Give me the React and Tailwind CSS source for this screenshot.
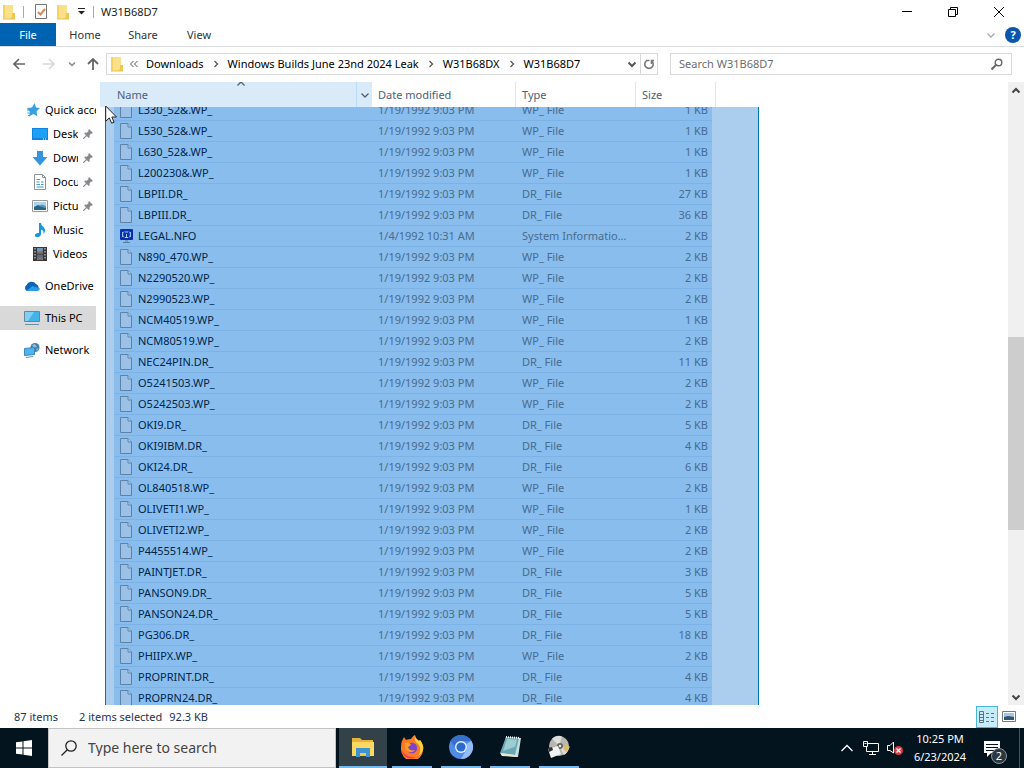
import { useLayoutEffect, useRef } from 'react';

const files = [
  ['L330_52&.WP_', 1], ['L530_52&.WP_', 1], ['L630_52&.WP_', 1], ['L200230&.WP_', 1],
  ['LBPII.DR_', 27], ['LBPIII.DR_', 36], ['LEGAL.NFO', 2], ['N890_470.WP_', 2],
  ['N2290520.WP_', 2], ['N2990523.WP_', 2], ['NCM40519.WP_', 1], ['NCM80519.WP_', 2],
  ['NEC24PIN.DR_', 11], ['O5241503.WP_', 2], ['O5242503.WP_', 2], ['OKI9.DR_', 5],
  ['OKI9IBM.DR_', 4], ['OKI24.DR_', 6], ['OL840518.WP_', 2], ['OLIVETI1.WP_', 1],
  ['OLIVETI2.WP_', 2], ['P4455514.WP_', 2], ['PAINTJET.DR_', 3], ['PANSON9.DR_', 5],
  ['PANSON24.DR_', 5], ['PG306.DR_', 18], ['PHIIPX.WP_', 2], ['PROPRINT.DR_', 4],
  ['PROPRN24.DR_', 4],
];

const fileType = (name) => {
  if (name.endsWith('.NFO')) return 'System Informatio...';
  return name.endsWith('.WP_') ? 'WP_ File' : 'DR_ File';
};

function Chevron({ dir = 'down', className = '' }) {
  const d = { down: 'M1.500 3.500L5 7l3.500-3.500', up: 'M1.500 6.500L5 3l3.500 3.500', right: 'M3.500 2l3 3-3 3' }[dir];
  return (
    <svg viewBox="0 0 10 10" className={`w-[10px] h-[10px] shrink-0 ${className}`} fill="none" stroke="currentColor" strokeWidth="1.300">
      <path d={d} />
    </svg>
  );
}

function FolderIcon() {
  return (
    <svg viewBox="0 0 14 16" className="w-[14px] h-4 shrink-0">
      <path d="M1 1h10v8l2 0v6H1z" fill="#fbe08a" />
      <path d="M1 1h2v14H1z" fill="#f6d264" />
      <path d="M10 9h3v6H8l2-2z" fill="#f0c64f" />
      <path d="M1 15h12" stroke="#e8c35a" />
    </svg>
  );
}

function FileIcon() {
  return (
    <svg viewBox="0 0 12 16" className="w-3 h-4 shrink-0" fill="#e9eef8" stroke="#8d8f94">
      <path d="M.5.5h7.500l3.500 3.500v11.500H.5z" />
      <path d="M8 .5V4h3.500" fill="#fff" />
    </svg>
  );
}

function NfoIcon() {
  return (
    <svg viewBox="0 0 14 16" className="w-[14px] h-4 shrink-0">
      <rect x="0" y="1" width="13" height="11" rx="1" fill="#1414a0" />
      <path d="M4 3.500a4 4 0 000 6M9 3.500a4 4 0 010 6M2.500 4v5M10.500 4v5" stroke="#dfe4ff" fill="none" />
      <path d="M5 4h3M6.500 6v3.500M5 9.500h3" stroke="#fff" />
      <path d="M3 14.500h7M5 13h3" stroke="#888" />
    </svg>
  );
}

function SideIcon({ type }) {
  return (
    <svg viewBox="0 0 16 16" className="w-4 h-4 shrink-0 overflow-visible">
      {type === 'star' && (
        <>
          <path d="M10.500 1l1.500 4.500 4 .5-3.500 3.300.8 5L9.500 12l-4.500 2.500 1-4.500L3 6l5-.5z" fill="#35a0e2" />
          <path d="M3 8h4M3.500 11h3M4 13.500h2" stroke="#35a0e2" />
        </>
      )}
      {type === 'desktop' && (
        <>
          <path d="M0 2h16v12H0z" fill="#0f84dc" />
          <path d="M1 3h14v9H1z" fill="#1ba0f5" />
          <path d="M11 13h1M13 13h1" stroke="#fff" />
        </>
      )}
      {type === 'downloads' && <path d="M5 1h6v6h4.500L8 15.500.5 7H5z" fill="#3594e0" />}
      {type === 'documents' && (
        <>
          <path d="M2.500.5h8l3 3v12h-11z" fill="#fff" stroke="#8c9298" />
          <path d="M10.500.5v3h3" fill="none" stroke="#8c9298" />
          <path d="M4.500 5.500H8M4.500 8h3M9 8h2.500M4.500 10.500H8M4.500 13h7M9 10.500h2.500" stroke="#3f96d2" />
        </>
      )}
      {type === 'pictures' && (
        <>
          <path d="M.5 2.500h15v11H.5z" fill="#fff" stroke="#999" />
          <path d="M2 4h12v8H2z" fill="#a9d5f0" />
          <path d="M2 9l4-2 8 3v2H2z" fill="#2c6487" />
          <path d="M7 8l3-1.500L14 8v2z" fill="#5c93b4" />
        </>
      )}
      {type === 'music' && (
        <path d="M7 1h2c0 3 4 4 4 7.500 0 1.500-.7 2.500-1.500 3.500.5-3-1-4.200-2.500-4.500V12c0 2-1.600 3.200-3.500 3.200S3 14.500 3 13.200s1.500-2.400 4-2.200z" fill="#1c94de" />
      )}
      {type === 'videos' && (
        <>
          <path d="M1 1h14v14H1z" fill="#38383c" />
          <path d="M5 2h6v5.500H5z" fill="#6f97ba" />
          <path d="M5 8.500h6V14H5z" fill="#4f6f90" />
          <path d="M5 5l3 1 3-2v3H5zM5 12l3-1 3 1v2H5z" fill="#8b6c58" />
          <path d="M3 2v12M13 2v12" stroke="#ddd" strokeDasharray="1.500 1.500" />
        </>
      )}
      {type === 'onedrive' && (
        <>
          <path d="M3 13a3.500 3.500 0 01-.5-6A5.500 5.500 0 0112 6 4 4 0 0113 13z" fill="#0a64b8" />
          <path d="M2 13l6.500-5L16 10.500A2.600 2.600 0 0113.500 13z" fill="#2b9be8" />
        </>
      )}
      {type === 'pc' && (
        <>
          <path d="M.5 1.500h15v10H.5z" fill="#46b2ea" stroke="#6b8796" />
          <path d="M1 2h9L4 11H1z" fill="#7fd0f5" />
          <path d="M1 14.500h14" stroke="#6f8ea0" />
        </>
      )}
      {type === 'network' && (
        <>
          <circle cx="11" cy="5.500" r="4.500" fill="#3a7fb2" />
          <path d="M8 3l3-1 2 3-3 1zM12 7l3-1-2 3z" fill="#9db9c8" />
          <path d="M.5 6.500l10-1v7l-10 1z" fill="#4cb4ef" stroke="#3f87ba" />
          <path d="M2 15.500l7-1" stroke="#5a95ba" />
        </>
      )}
    </svg>
  );
}

function Pin() {
  return (
    <svg viewBox="0 0 10 10" className="w-[10px] h-[10px] shrink-0">
      <path d="M6 0l4 4-1.200.8-.8-.2L6.500 6.500l.2 1.700-1 .8L1.200 4.500l1-1 1.700.2L5.500 2l-.2-1z" fill="#85898d" />
      <path d="M3.500 6.500L.3 9.700" stroke="#85898d" strokeWidth="1.200" />
    </svg>
  );
}

function SideItem({ icon, label, pinned, nested, active }) {
  return (
    <a href="#" className={`flex h-6 items-center gap-[5px] overflow-hidden whitespace-nowrap ${nested ? 'pl-8' : 'pl-6'} ${active ? 'bg-[#d9d9d9]' : ''}`}>
      <SideIcon type={icon} />
      <span className={pinned ? 'w-[25px] overflow-hidden' : ''}>{label}</span>
      {pinned && <Pin />}
    </a>
  );
}

function TitleBar() {
  return (
    <header className="flex h-[23px] items-center pl-[2px]">
      <FolderIcon />
      <span className="ml-[7px] h-3 w-px bg-[#aaa]" />
      <button aria-label="Properties" className="ml-[11px]">
        <svg viewBox="0 0 12 15" className="h-[15px] w-3">
          <path d="M.5.5h11v14H.5z" fill="#fff" stroke="#777" />
          <path d="M3 8l2.500 2.500L10 5" fill="none" stroke="#d98759" strokeWidth="2" />
        </svg>
      </button>
      <button aria-label="New folder" className="ml-[9px]"><FolderIcon /></button>
      <button aria-label="Customize" className="ml-2">
        <svg viewBox="0 0 7 7" className="h-[7px] w-[7px]"><path d="M0 .5h7" stroke="#222" /><path d="M0 3h7L3.500 6.500z" fill="#222" /></svg>
      </button>
      <span className="ml-2 h-3 w-px bg-[#aaa]" />
      <h1 className="ml-[7px] flex-1">W31B68D7</h1>
      <div className="flex pr-[2px] text-black">
        <button aria-label="Minimize" className="flex w-[46px] justify-center">
          <svg viewBox="0 0 10 10" className="w-[10px]" stroke="currentColor"><path d="M0 4.500h10" /></svg>
        </button>
        <button aria-label="Restore" className="flex w-[46px] justify-center">
          <svg viewBox="0 0 10 10" className="w-[10px]" fill="none" stroke="currentColor"><path d="M.5 2.500h7v7h-7zM2.500 2V.5h7v7H8" /></svg>
        </button>
        <button aria-label="Close" className="flex w-[46px] justify-center">
          <svg viewBox="0 0 10 10" className="w-[10px]" stroke="currentColor"><path d="M0 0l10 10M10 0L0 10" /></svg>
        </button>
      </div>
    </header>
  );
}

function Ribbon() {
  return (
    <nav className="flex h-6 items-stretch border-b border-[#dadbdc] text-[#333]">
      <button className="w-14 bg-[#0063b1] text-white">File</button>
      <button className="w-[58px]">Home</button>
      <button className="w-[58px]">Share</button>
      <button className="w-[54px]">View</button>
      <div className="ml-auto flex items-center gap-[9px] pr-[3px]">
        <button aria-label="Expand ribbon" className="text-[#aaa]"><Chevron /></button>
        <button aria-label="Help" className="h-4 w-4 rounded-full bg-[#0a56ad] text-center font-bold text-white">?</button>
      </div>
    </nav>
  );
}

function AddressBar() {
  return (
    <div className="flex h-[35px] items-start pr-3 pt-[6px]">
      <div className="flex h-[22px] w-[106px] shrink-0 items-center text-[#666]">
        <button aria-label="Back" className="ml-[13px]">
          <svg viewBox="0 0 12 12" className="h-3 w-3" fill="none" stroke="currentColor" strokeWidth="1.600"><path d="M12 6H1M6 1L1 6l5 5" /></svg>
        </button>
        <button aria-label="Forward" className="ml-[18px] text-[#d8d8d8]">
          <svg viewBox="0 0 12 12" className="h-3 w-3" fill="none" stroke="currentColor" strokeWidth="1.600"><path d="M0 6h11M6 1l5 5-5 5" /></svg>
        </button>
        <button aria-label="Recent locations" className="ml-[13px]">
          <svg viewBox="0 0 8 8" className="h-2 w-2" fill="none" stroke="#888" strokeWidth="1.500"><path d="M1 2.500l3 3 3-3" /></svg>
        </button>
        <button aria-label="Up" className="ml-[11px]">
          <svg viewBox="0 0 12 12" className="h-3 w-3" fill="none" stroke="currentColor" strokeWidth="1.800"><path d="M6 12V1M1 6l5-5 5 5" /></svg>
        </button>
      </div>
      <div className="flex h-[22px] min-w-0 flex-1 items-center border border-[#d9d9d9] pl-[3px] whitespace-nowrap text-black">
        <FolderIcon />
        <svg viewBox="0 0 8 8" className="ml-[6px] h-2 w-2" fill="none" stroke="#555"><path d="M3.500 1l-3 3 3 3M7.500 1l-3 3 3 3" /></svg>
        <a href="#" className="ml-2">Downloads</a>
        <Chevron dir="right" className="mx-[7px] text-[#555]" />
        <a href="#">Windows Builds June 23nd 2024 Leak</a>
        <Chevron dir="right" className="mx-[7px] text-[#555]" />
        <a href="#">W31B68DX</a>
        <Chevron dir="right" className="mx-[7px] text-[#555]" />
        <a href="#">W31B68D7</a>
        <button aria-label="Previous locations" className="ml-auto px-[3px] text-[#555]"><Chevron className="stroke-2" /></button>
        <button aria-label="Refresh" className="flex h-full w-[17px] items-center justify-center border-l border-[#d9d9d9]">
          <svg viewBox="0 0 12 12" className="h-3 w-3" fill="none" stroke="#777" strokeWidth="1.600"><path d="M3.500 2.800a4.200 4.200 0 105 0M3 2.500h3.500M3.500 2.500" /><path d="M6 .5v5" strokeWidth="0" /><path d="M8.500 6V2.500H11" /></svg>
        </button>
      </div>
      <label className="ml-3 flex h-[22px] w-[342px] items-center border border-[#d9d9d9] px-2">
        <input aria-label="Search" placeholder="Search W31B68D7" className="min-w-0 flex-1 outline-none placeholder:text-[#6d6d6d]" />
        <svg viewBox="0 0 12 12" className="h-3 w-3" fill="none" stroke="#666" strokeWidth="1.400"><circle cx="7.500" cy="4.500" r="3.300" /><path d="M5 7l-4.500 4.500" strokeWidth="2" /></svg>
      </label>
    </div>
  );
}

function Sidebar() {
  return (
    <aside className="w-[100px] shrink-0 pr-1 pt-4 text-black">
      <SideItem icon="star" label="Quick access" />
      <SideItem icon="desktop" label="Desktop" nested pinned />
      <SideItem icon="downloads" label="Downloads" nested pinned />
      <SideItem icon="documents" label="Documents" nested pinned />
      <SideItem icon="pictures" label="Pictures" nested pinned />
      <SideItem icon="music" label="Music" nested />
      <SideItem icon="videos" label="Videos" nested />
      <div className="mt-2 space-y-2">
        <SideItem icon="onedrive" label="OneDrive" />
        <SideItem icon="pc" label="This PC" active />
        <SideItem icon="network" label="Network" />
      </div>
    </aside>
  );
}

function FileList() {
  const listRef = useRef(null);

  useLayoutEffect(() => { listRef.current.scrollTop = 7; }, []);

  return (
    <main className="relative min-w-0 flex-1">
      <div ref={listRef} className="h-full overflow-hidden">
        <table className="w-[616px] table-fixed border-separate border-spacing-0 whitespace-nowrap text-[#6d6d6d]">
          <thead className="sticky top-0 z-10 bg-white text-left text-[#4c607a]">
            <tr className="h-[25px]">
              <th className="w-[272px] bg-[#d9ebf9] p-0 font-normal">
                <div className="relative flex h-[25px] items-center pl-[17px]">
                  Name
                  <Chevron dir="up" className="absolute -top-[3px] left-1/2" />
                  <button aria-label="Filter" className="ml-auto flex h-full w-4 items-center justify-center border-l border-[#b9dcf5]"><Chevron /></button>
                </div>
              </th>
              <th className="w-36 border-r border-[#e5e5e5] p-0 pl-[6px] font-normal">Date modified</th>
              <th className="w-[120px] border-r border-[#e5e5e5] p-0 pl-[6px] font-normal">Type</th>
              <th className="border-r border-[#e5e5e5] p-0 pl-[6px] font-normal">Size</th>
            </tr>
          </thead>
          <tbody>
            {files.map(([name, size]) => (
              <tr key={name} className="h-[21px]">
                <td className="p-0">
                  <div className="ml-[14px] flex h-[21px] items-center border-b border-[#b9d7f2] bg-[#cce8ff] pl-[6px] text-black">
                    <span className="flex w-[18px]">{name.endsWith('.NFO') ? <NfoIcon /> : <FileIcon />}</span>
                    {name}
                  </div>
                </td>
                <td className="border-b border-[#b9d7f2] bg-[#cce8ff] p-0 pl-[6px]">{name === 'LEGAL.NFO' ? '1/4/1992 10:31 AM' : '1/19/1992 9:03 PM'}</td>
                <td className="border-b border-[#b9d7f2] bg-[#cce8ff] p-0 pl-[6px]">{fileType(name)}</td>
                <td className="p-0">
                  <div className="mr-1 flex h-[21px] items-center justify-end border-b border-[#b9d7f2] bg-[#cce8ff] pr-1">{size} KB</div>
                </td>
              </tr>
            ))}
          </tbody>
        </table>
      </div>
      {/* rubber band selection */}
      <div className="absolute bottom-0 left-[5px] top-[25px] z-20 w-[654px] border-x border-[#0078a8] bg-[#0066cc]/33" />
      <svg viewBox="0 0 12 19" className="absolute left-[5px] top-[23px] z-30 h-[19px] w-3">
        <path d="M.7 1v15.300l3.600-3.400 2.300 5.300 2.500-1-2.300-5.200h4.700z" fill="#fff" stroke="#222" />
      </svg>
    </main>
  );
}

function ScrollBar() {
  return (
    <div className="flex w-4 shrink-0 flex-col bg-[#f0f0f0] text-[#444]">
      <button aria-label="Scroll up" className="flex h-[17px] items-center justify-center"><Chevron dir="up" className="stroke-2" /></button>
      <div className="grow-[238]" />
      <div className="grow-[193] bg-[#cdcdcd]" />
      <div className="grow-[158]" />
      <button aria-label="Scroll down" className="flex h-[17px] items-center justify-center"><Chevron className="stroke-2" /></button>
    </div>
  );
}

function StatusBar() {
  return (
    <footer className="flex h-[23px] items-center pl-[14px] pr-2 text-[#26334f]">
      <span className="w-[65px]">87 items</span>
      <span>2 items selected</span>
      <span className="ml-[7px]">92.3 KB</span>
      <button aria-label="Details view" className="ml-auto flex h-[22px] w-[22px] items-center justify-center border border-[#4ab5d8] bg-[#c5ecf8]">
        <svg viewBox="0 0 16 12" className="h-3 w-4" fill="none" stroke="#5b7482">
          <path d="M.5.5h4v11h-4zM.5 3.500h4M.5 6.500h4M.5 9.500h4" />
          <path d="M7 2.500h3M12 2.500h3M7 6.500h3M12 6.500h3M7 10.500h3M12 10.500h3" />
        </svg>
      </button>
      <button aria-label="Large icons view" className="ml-1">
        <svg viewBox="0 0 14 11" className="h-[11px] w-[14px]"><path d="M.5.5h13v10H.5z" fill="#fff" stroke="#777" /><path d="M2 2h10v7H2z" fill="#a5c5e2" /><path d="M2 6l4-1 6 1v3H2z" fill="#34536f" /></svg>
      </button>
    </footer>
  );
}

function AppIcon({ type }) {
  return (
    <svg viewBox="0 0 24 24" className="h-6 w-6">
      {type === 'explorer' && (
        <>
          <path d="M1 3h8l2 2h11v16H1z" fill="#e9b23a" />
          <path d="M1 7h22v14H1z" fill="#fbd862" />
          <path d="M5 13h14v9h-4v-4H9v4H5z" fill="#3d94cf" />
          <path d="M9 18h6v3H9z" fill="#f4c84a" />
        </>
      )}
      {type === 'firefox' && (
        <>
          <path d="M2 6l2-4 2 3c2-1 4-1 5-1 1-2 2-3 4-4 0 3 2 4 4 6l1-1c2 3 4 6 3 10a11 11 0 01-22-1c0-3 0-5 1-8z" fill="#fb7a25" />
          <path d="M15 0c0 3 2 4 4 6l1-1c2 3 4 6 3 10-1 3-3 5-5 6 3-4 3-9 0-12-3-2-4-5-3-9z" fill="#ffd43b" />
          <path d="M2 16c3 5 8 7 14 6-6 3-13 0-14-6z" fill="#f0305f" />
          <circle cx="12" cy="13" r="5.200" fill="#7745cf" />
          <path d="M5 8c3-1 5 0 6 2l-3 2c1 3 3 4 7 3-3 4-9 2-10-2z" fill="#ff9b2b" />
        </>
      )}
      {type === 'chromium' && (
        <>
          <circle cx="12" cy="12" r="12" fill="#4e8de6" />
          <path d="M1.600 6A12 12 0 0122.400 6H12a6 6 0 00-6 6z" fill="#3670c9" />
          <path d="M22.400 6A12 12 0 0112 24l5.200-9a6 6 0 000-6z" fill="#94bcf5" />
          <circle cx="12" cy="12" r="6" fill="#e9f1fd" />
          <circle cx="12" cy="12" r="4.600" fill="#2d6cce" />
        </>
      )}
      {type === 'notepad' && (
        <>
          <path d="M8 2l15 1-3 19-17-2z" fill="#c6dfe1" />
          <path d="M8 2l13 1-4 17L2 18z" fill="#69a9b3" />
          <path d="M9 4l10 .8-2 7L5 16z" fill="#9dccd2" />
          <path d="M2 18l15 2 3 2-16-1z" fill="#ece8cf" />
          <path d="M8 2l14 1" stroke="#eef7f7" strokeWidth="2" strokeDasharray="1 1" />
        </>
      )}
      {type === 'disk' && (
        <>
          <circle cx="12" cy="11" r="10" fill="#b7b7b0" />
          <path d="M12 11L5 3.500A10 10 0 0115 1.500zM12 11l10 2a10 10 0 01-5 7z" fill="#dededa" />
          <circle cx="13" cy="11" r="3" fill="#65655f" />
          <circle cx="13" cy="11" r="1.200" fill="#eee" />
          <path d="M1 14l10-3 3 8-10 4z" fill="#f3f3f3" />
          <path d="M1 13l4-1 1 3-4 2z" fill="#333" />
          <path d="M19 9l4 3-4 5-3-3z" fill="#d9bd68" />
        </>
      )}
    </svg>
  );
}

function TaskbarApp({ type, active }) {
  return (
    <button aria-label={type} className={`flex w-12 flex-col items-center justify-between ${active ? 'bg-[#334148]' : ''}`}>
      <span className="flex flex-1 items-center"><AppIcon type={type} /></span>
      <span className={`h-[2px] bg-[#76b9ed] ${active ? 'w-full' : 'w-10'}`} />
    </button>
  );
}

function Taskbar() {
  return (
    <div className="flex h-10 items-stretch bg-[#03141f] text-white">
      <button aria-label="Start" className="flex w-12 items-center justify-center">
        <svg viewBox="0 0 16 16" className="h-4 w-4" fill="#fff"><path d="M0 2.300l6.500-.9v6.100H0zM7.500 1.200L16 0v7.500H7.500zM0 8.500h6.500v6.100L0 13.700zM7.500 8.500H16V16l-8.500-1.200z" /></svg>
      </button>
      <label className="flex w-72 items-center border border-[#c4c4c4] bg-[#f2f2f2] pl-3">
        <svg viewBox="0 0 16 16" className="h-4 w-4" fill="none" stroke="#222" strokeWidth="1.300"><circle cx="10" cy="6" r="5.200" /><path d="M6.300 9.700L.5 15.500" /></svg>
        <input aria-label="Type here to search" placeholder="Type here to search" className="ml-[11px] min-w-0 flex-1 text-[14px] outline-none placeholder:text-[#444]" />
      </label>
      <div className="ml-[3px] flex gap-px">
        <TaskbarApp type="explorer" active />
        <TaskbarApp type="firefox" />
        <TaskbarApp type="chromium" />
        <TaskbarApp type="notepad" />
        <TaskbarApp type="disk" />
      </div>
      <div className="ml-auto flex items-center">
        <button aria-label="Show hidden icons">
          <svg viewBox="0 0 12 8" className="h-2 w-3" fill="none" stroke="#fff" strokeWidth="1.300"><path d="M.5 7L6 1.500 11.500 7" /></svg>
        </button>
        <button aria-label="Network" className="ml-[10px]">
          <svg viewBox="0 0 16 14" className="h-[14px] w-4" fill="none" stroke="#fff"><path d="M5 2.500h10.500v8H3.500V6M.5.500h4v5h-4zM1.500 2.500h2M9.500 10.500v3M6 13.500h7" /></svg>
        </button>
        <button aria-label="Volume" className="ml-2">
          <svg viewBox="0 0 16 14" className="h-[14px] w-4" fill="none" stroke="#fff">
            <path d="M.5 4.500H3l3.500-3.500v11L3 9.500H.5z" />
            <circle cx="11.500" cy="9.500" r="4.500" fill="#d83b43" stroke="none" />
            <path d="M9.500 7.500l4 4M13.500 7.500l-4 4" strokeWidth="1.300" />
          </svg>
        </button>
        <div className="w-[74px] text-center leading-[18px]">
          <div>10:25 PM</div>
          <div>6/23/2024</div>
        </div>
        <button aria-label="Notifications" className="relative ml-[6px] mr-[18px]">
          <svg viewBox="0 0 18 17" className="h-[17px] w-[18px]"><path d="M1 1h16v12H8l-4 4v-4H1z" fill="#fff" /><path d="M3 4.500h12M3 7.500h12M3 10.500h8" stroke="#03141f" /></svg>
          <span className="absolute left-2 top-2 h-4 w-4 rounded-full border border-[#8a9298] bg-[#2c383f] text-center leading-[14px]">2</span>
        </button>
        <span className="mr-1 h-10 w-px bg-[#43505a]" />
      </div>
    </div>
  );
}

export default function App() {
  return (
    <div className="flex h-screen flex-col overflow-hidden bg-white font-['Noto_Sans','Open_Sans',sans-serif] text-[11px] leading-4 text-[#222]">
      <TitleBar />
      <Ribbon />
      <AddressBar />
      <div className="flex min-h-0 flex-1">
        <Sidebar />
        <FileList />
        <ScrollBar />
      </div>
      <StatusBar />
      <Taskbar />
    </div>
  );
}
